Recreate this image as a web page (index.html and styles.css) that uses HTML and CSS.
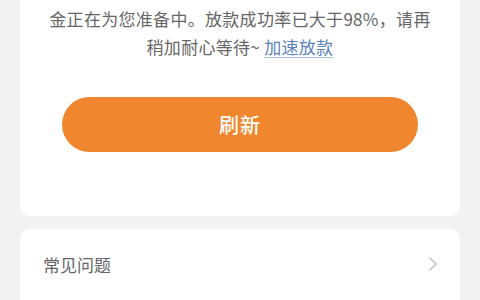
FILE: index.html
```html
<!DOCTYPE html>
<html lang="zh-CN">
<head>
<meta charset="utf-8">
<link rel="stylesheet" href="styles.css">
</head>
<body>
<main class="page">
  <section class="card status">
    <p class="msg">金正在为您准备中。放款成功率已大于98%，请再<br>稍加耐心等待~ <a class="link" href="#">加速放款</a></p>
    <button class="btn">刷新</button>
  </section>
  <section class="card faq">
    <div class="row">
      <span class="row-title">常见问题</span>
      <svg class="chev" width="10" height="16" viewBox="0 0 10 16"><path d="M2 2 L8 8 L2 14" fill="none" stroke="#c4c4c4" stroke-width="1.6" stroke-linecap="round" stroke-linejoin="round"/></svg>
    </div>
  </section>
</main>
</body>
</html>
```

FILE: styles.css
```css
* { box-sizing: border-box; }
html, body { margin: 0; padding: 0; }
body {
  background: #f2f2f2;
  font-family: "Noto Sans CJK SC", "Noto Sans", sans-serif;
  width: 480px;
  height: 300px;
  overflow: hidden;
}
.page {
  padding: 0 20px;
  display: flex;
  flex-direction: column;
  gap: 13px;
}
.card {
  background: #fff;
  border-radius: 10px;
}
.status {
  border-radius: 0 0 10px 10px;
  padding: 5px 42px 64px;
  display: flex;
  flex-direction: column;
  align-items: center;
}
.msg {
  margin: 0;
  font-size: 17px;
  line-height: 28px;
  color: #666;
  text-align: center;
  white-space: nowrap;
  letter-spacing: 0.3px;
}
.link {
  color: #5b82bd;
  text-decoration: underline;
  text-decoration-color: #a9c0e0;
  text-underline-offset: 3px;
}
.btn {
  margin-top: 36px;
  width: 356px;
  height: 55px;
  border: none;
  border-radius: 28px;
  background: #f0872e;
  color: #fff;
  font-family: inherit;
  font-size: 20px;
  font-weight: 500;
  letter-spacing: 1px;
}
.faq { padding: 0 22px 30px 23px; }
.row {
  height: 70px;
  display: flex;
  align-items: center;
  justify-content: space-between;
}
.row-title {
  font-size: 17px;
  color: #666;
}
.chev { display: block; }
```
